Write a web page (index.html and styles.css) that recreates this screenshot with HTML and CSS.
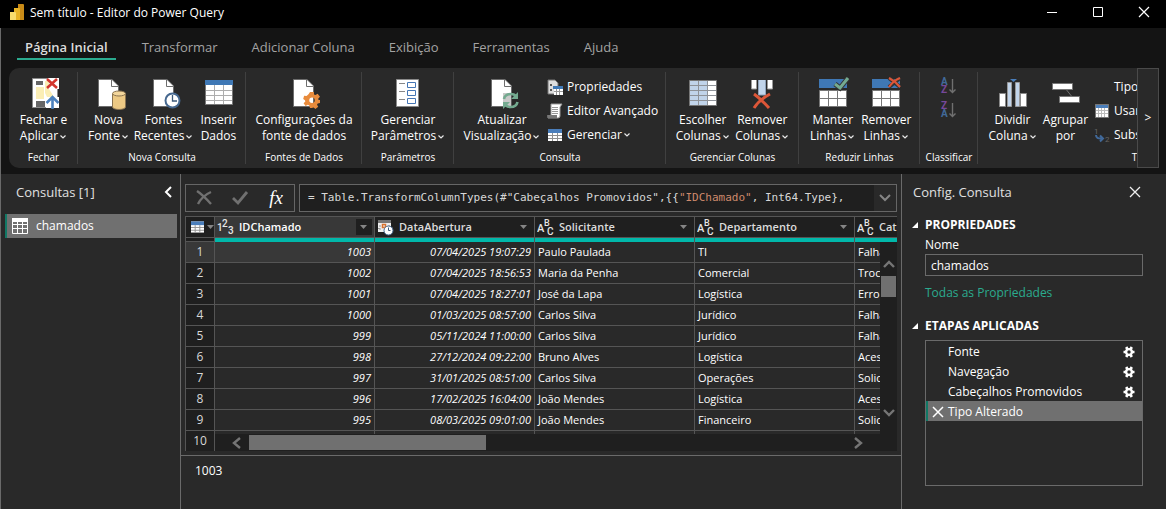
FILE: index.html
```html
<!DOCTYPE html>
<html lang="pt-BR">
<head>
<meta charset="utf-8">
<title>Sem título - Editor do Power Query</title>
<link rel="stylesheet" href="styles.css">
</head>
<body>
<svg class="defs" aria-hidden="true">
  <symbol id="page" viewBox="0 0 32 32"><path d="M5.500 2.500h13.500l6.500 6.500v20.500h-20z" fill="#fff" stroke="#6d6d6d"/><path d="M18.500 3v6.500h7" fill="#fff" stroke="#6d6d6d"/></symbol>
  <symbol id="chev" viewBox="0 0 8 6"><path d="M1.500 1.500l2.500 2.500 2.500-2.500" fill="none" stroke="#e8e8e8" stroke-width="1.200"/></symbol>
  <symbol id="gear" viewBox="0 0 18 18"><path fill-rule="evenodd" d="M7 1h4v2.400l1.500.7 2.100-1.300 2.400 3-1.700 1.600.2 1.600H17v3l-2.300.4-.7 1.400 1.200 2-2.800 2.200-1.700-1.500-1.200.3L9 17H7l-.7-2.500-1.500-.7L2.600 15 .600 12.200l1.700-1.700L2 9.200.200 8l.9-3.200 2.400.300 1.200-1.100 1-1zM9 6.500a2.700 2.700 0 100 5.400 2.700 2.700 0 000-5.400z"/></symbol>
  <symbol id="cog" viewBox="0 0 12 12"><path d="M6 6m-5.500 0h11M3.200 1l5.600 10M8.800 1L3.200 11" stroke="#fff" stroke-width="2.600"/><circle cx="6" cy="6" r="2.900" fill="#292929" stroke="#fff" stroke-width="2.400"/></symbol>
  <symbol id="grid" viewBox="0 0 14 12"><path d="M0 0h14v12H0z" fill="#fff"/><path d="M0 0h14v4H0z" fill="#4a7ebb"/><path d="M0 6.500h14M0 9.500h14M4.500 4v8M9.500 4v8" stroke="#8f8f8f"/></symbol>
  <symbol id="abc" viewBox="0 0 17 18"><g fill="#e6e6e6" font-family="Roboto, sans-serif" font-size="11" font-weight="500"><text x="0" y="14">A</text><text x="7" y="8" font-size="9">B</text><text x="10" y="17" font-size="10">C</text></g></symbol>
  <symbol id="drop" viewBox="0 0 8 5"><path d="M0 0h7l-3.500 4z" fill="#858585"/></symbol>
</svg>

<header class="titlebar">
  <svg class="logo" viewBox="0 0 14 16"><path d="M8 0h5q1 0 1 1v15H8z" fill="#c98b17"/><path d="M4 4h5q1 0 1 1v11H4z" fill="#e8b325"/><path d="M0 8h5q1 0 1 1v7H0z" fill="#f8dc6c"/></svg>
  <h1>Sem título - Editor do Power Query</h1>
  <div class="window-buttons">
    <button aria-label="Minimizar"><svg viewBox="0 0 12 12"><path d="M1 6.500h10" stroke="#fff"/></svg></button>
    <button aria-label="Maximizar"><svg viewBox="0 0 12 12"><path d="M1.500 1.500h9v9h-9z" fill="none" stroke="#fff"/></svg></button>
    <button aria-label="Fechar"><svg viewBox="0 0 12 12"><path d="M1 1l10 10M11 1L1 11" stroke="#fff" stroke-width="1.200"/></svg></button>
  </div>
</header>

<div class="app">
  <nav class="tabs">
    <button class="active">Página Inicial</button><button>Transformar</button><button>Adicionar Coluna</button><button>Exibição</button><button>Ferramentas</button><button>Ajuda</button>
  </nav>

  <div class="ribbon">
    <div class="groups">
      <section class="group g-close">
        <div class="tools">
          <button class="tool"><svg viewBox="0 0 32 32"><path d="M4.500 1.500h25v29h-25z" fill="#fff" stroke="#8a8a8a"/><path d="M20 1h11v11H20zM18 20h13v11H18z" fill="#fff"/><path d="M8 4h7v4H8zM8 24h9v6H8z" fill="#666"/><path d="M8 10h8v12H8zM17 4h4v8l5 8h-7l-2-4z" fill="#fbeeb5"/><path d="M19 2l10 9M29 2l-10 9" stroke="#d2352d" stroke-width="2.600"/><path d="M24.500 32V21M18.500 26l6-6 6 6" fill="none" stroke="#4c81bd" stroke-width="2.600"/></svg><span>Fechar e<br>Aplicar<svg class="chev"><use href="#chev"/></svg></span></button>
        </div>
        <h2>Fechar</h2>
      </section>
      <section class="group g-new">
        <div class="tools">
          <button class="tool"><svg viewBox="0 0 32 32"><use href="#page"/><path d="M19.500 17v13c0 3.300 13 3.300 13 0V17z" fill="#edc984" stroke="#8a7350"/><ellipse cx="26" cy="16.500" rx="6.500" ry="2.500" fill="#f3d69b" stroke="#8a7350"/></svg><span>Nova<br>Fonte<svg class="chev"><use href="#chev"/></svg></span></button>
          <button class="tool"><svg viewBox="0 0 32 32"><use href="#page"/><circle cx="24.500" cy="23.500" r="7" fill="#fff" stroke="#46688f" stroke-width="2"/><path d="M24.500 18v6h4.500" fill="none" stroke="#3b5878" stroke-width="1.300"/></svg><span>Fontes<br>Recentes<svg class="chev"><use href="#chev"/></svg></span></button>
          <button class="tool"><svg viewBox="0 0 32 32"><path d="M2.500 3.500h27v24h-27z" fill="#fff" stroke="#777"/><path d="M2 3h28v5H2z" fill="#3f78b5"/><path d="M3 13.500h26M3 18.500h26M3 23.500h26M11.500 8v19M20.500 8v19" stroke="#adadad"/></svg><span>Inserir<br>Dados</span></button>
        </div>
        <h2>Nova Consulta</h2>
      </section>
      <section class="group g-source">
        <div class="tools">
          <button class="tool"><svg viewBox="0 0 32 32"><use href="#page"/><use href="#gear" x="15" y="14" width="18" height="18" fill="#e88b3c"/></svg><span>Configurações da<br>fonte de dados</span></button>
        </div>
        <h2>Fontes de Dados</h2>
      </section>
      <section class="group g-param">
        <div class="tools">
          <button class="tool"><svg viewBox="0 0 32 32"><path d="M4.500 2.500h22v27h-22z" fill="#fff" stroke="#8a8a8a"/><path d="M7 6.500h6M7 14.500h6M7 22.500h6" stroke="#888"/><path d="M15.500 5.500h8v5h-8zM15.500 13.500h8v5h-8zM15.500 21.500h8v5h-8z" fill="#fff" stroke="#4576b5"/></svg><span>Gerenciar<br>Parâmetros<svg class="chev"><use href="#chev"/></svg></span></button>
        </div>
        <h2>Parâmetros</h2>
      </section>
      <section class="group g-query">
        <div class="tools">
          <button class="tool"><svg viewBox="0 0 32 32"><use href="#page"/><path d="M17 16h15v14H17z" fill="#292929" opacity=".25"/><path d="M18 22q1-5 7-5 3 0 5 2M31.500 25q-1 5-7 5-3 0-5-2" fill="none" stroke="#74aa90" stroke-width="2.600"/><path d="M32 15v7h-7zM17 32v-7h7z" fill="#74aa90"/></svg><span>Atualizar<br>Visualização<svg class="chev"><use href="#chev"/></svg></span></button>
          <div class="stack">
            <button><svg viewBox="0 0 16 16"><path d="M1 1h7l3 3v11H1z" fill="#ddd" stroke="#777"/><path d="M3 5h2v2H3zM3 10h2v2H3z" fill="#555"/><path d="M7 8h9v8H7z" fill="#fff"/><path d="M6 7h10v3H6z" fill="#3f78b5"/><path d="M7 12.500h9M9.500 10v6M12.500 10v6" stroke="#999"/></svg>Propriedades</button>
            <button><svg viewBox="0 0 16 16"><path d="M4 1h11l-2 3v9q0 2-2 2H1v-2h3z" fill="#fff" stroke="#999"/><path d="M5 4.500h6M5 6.500h6M5 8.500h6M5 10.500h6" stroke="#999"/><path d="M0 12h10v3H1z" fill="#777"/></svg>Editor Avançado</button>
            <button><svg viewBox="0 0 16 16"><use href="#grid" x="1" y="2" width="14" height="12"/></svg>Gerenciar<svg class="chev"><use href="#chev"/></svg></button>
          </div>
        </div>
        <h2>Consulta</h2>
      </section>
      <section class="group g-cols">
        <div class="tools">
          <button class="tool"><svg viewBox="0 0 32 32"><path d="M2.500 3.500h27v25h-27z" fill="#fff" stroke="#777"/><path d="M3 4h17v24H3z" fill="#c1d4ea"/><path d="M3 8.500h26M3 13.500h26M3 18.500h26M3 23.500h26M11.500 4v24M20.500 4v24" stroke="#8e9298"/></svg><span>Escolher<br>Colunas<svg class="chev"><use href="#chev"/></svg></span></button>
          <button class="tool"><svg viewBox="0 0 32 32"><path d="M5.500 3v9h5V3M21.500 3v9h5V3" fill="#fff" stroke="#999"/><path d="M12.500 3v15h7V3" fill="#c1d4ea" stroke="#8fa3bb"/><path d="M8 17q7 5 15 14M24 17Q13 23 8 31" fill="none" stroke="#dc5638" stroke-width="3"/></svg><span>Remover<br>Colunas<svg class="chev"><use href="#chev"/></svg></span></button>
        </div>
        <h2>Gerenciar Colunas</h2>
      </section>
      <section class="group g-rows">
        <div class="tools">
          <button class="tool"><svg viewBox="0 0 32 32"><path d="M2 2h28v9H2z" fill="#3f78b5"/><path d="M2.500 13.500h27v16h-27zM2.500 21.500h27M11.500 13v16M20.500 13v16" fill="#fff" stroke="#777"/><path d="M18 7l5 4 8-10" fill="none" stroke="#333" stroke-width="5"/><path d="M18 7l5 4 8-10" fill="none" stroke="#74aa90" stroke-width="3"/></svg><span>Manter<br>Linhas<svg class="chev"><use href="#chev"/></svg></span></button>
          <button class="tool"><svg viewBox="0 0 32 32"><path d="M2 2h28v9H2z" fill="#3f78b5"/><path d="M2.500 13.500h27v16h-27zM2.500 21.500h27M11.500 13v16M20.500 13v16" fill="#fff" stroke="#777"/><path d="M19 1l11 9M30 1L19 10" fill="none" stroke="#333" stroke-width="4"/><path d="M19 1q6 3 11 9M30 1Q23 4 19 10" fill="none" stroke="#dc5638" stroke-width="2.200"/></svg><span>Remover<br>Linhas<svg class="chev"><use href="#chev"/></svg></span></button>
        </div>
        <h2>Reduzir Linhas</h2>
      </section>
      <section class="group g-sort">
        <div class="tools sorts">
          <button aria-label="Classificar em Ordem Crescente"><svg viewBox="0 0 16 18"><g font-family="Roboto, sans-serif" font-size="10" font-weight="700"><text x="0" y="8" fill="#41699a">A</text><text x="0" y="16" fill="#76489a">Z</text></g><path d="M11.500 2v14M8.500 12.500l3 3 3-3" fill="none" stroke="#707070" stroke-width="1.400"/></svg></button>
          <button aria-label="Classificar em Ordem Decrescente"><svg viewBox="0 0 16 18"><g font-family="Roboto, sans-serif" font-size="10" font-weight="700"><text x="0" y="8" fill="#76489a">Z</text><text x="0" y="16" fill="#41699a">A</text></g><path d="M11.500 2v14M8.500 12.500l3 3 3-3" fill="none" stroke="#707070" stroke-width="1.400"/></svg></button>
        </div>
        <h2>Classificar</h2>
      </section>
      <section class="group g-transform">
        <div class="tools">
          <button class="tool"><svg viewBox="0 0 32 32"><path d="M2.500 16.500h6v13h-6zM23.500 16.500h6v13h-6z" fill="#fff" stroke="#888"/><path d="M10.500 5.500h4v24h-4zM18.500 5.500h4v24h-4z" fill="#c1d4ea" stroke="#999"/><path d="M13 2h7l-3.500 3z" fill="#4a7ebb"/></svg><span>Dividir<br>Coluna<svg class="chev"><use href="#chev"/></svg></span></button>
          <button class="tool"><svg viewBox="0 0 32 32"><path d="M15 11l8 10" stroke="#707070"/><path d="M2.500 6.500h20v6h-20zM9.500 19.500h20v6h-20z" fill="#fff" stroke="#777"/></svg><span>Agrupar<br>por</span></button>
          <div class="stack">
            <button><svg viewBox="0 0 16 16"></svg>Tipo</button>
            <button><svg viewBox="0 0 16 16"><path d="M1.500 1.500h13v13h-13z" fill="#fff" stroke="#777"/><path d="M2 2h12v3H2z" fill="#4a7ebb"/><path d="M2 7.500h12M2 10.500h12M4.500 5v9M7.500 5v9M10.500 5v9" stroke="#bbb"/></svg>Usar</button>
            <button><svg viewBox="0 0 16 16"><g fill="#666" font-family="Roboto, sans-serif" font-size="8"><text x="0" y="7">1</text><text x="11" y="15">2</text></g><path d="M2 8q0 4 6 3.500M6 8.500l3 3-3 3" fill="none" stroke="#41699a" stroke-width="2"/></svg>Substituir</button>
          </div>
        </div>
        <h2>Transformar</h2>
      </section>
    </div>
    <button class="more" aria-label="Rolar para a direita">&gt;</button>
  </div>

  <main class="workspace">
    <aside class="queries">
      <div class="panel-head"><h2>Consultas [1]</h2><button aria-label="Recolher"><svg width="8" height="12" viewBox="0 0 8 12"><path d="M7 1L2 6l5 5" fill="none" stroke="#fff" stroke-width="2"/></svg></button></div>
      <button class="query"><svg width="16" height="16" viewBox="0 0 16 16"><path d="M.5.500h15v15H.5zM0 6.500h16M0 10.500h16M5.500 4v12M10.500 4v12" fill="none" stroke="#fff"/><path d="M0 0h16v4H0z" fill="#fff"/></svg>chamados</button>
    </aside>

    <section class="center">
      <div class="formula">
        <div class="formula-tools">
          <button aria-label="Cancelar"><svg width="16" height="16" viewBox="0 0 16 16"><path d="M1 1q6 4 14 13M15 2Q6 6 2 14" fill="none" stroke="#707070" stroke-width="2.400"/></svg></button>
          <button aria-label="Confirmar"><svg width="16" height="16" viewBox="0 0 16 16"><path d="M1 8l5 5L15 2" fill="none" stroke="#707070" stroke-width="2.800"/></svg></button>
          <button class="fx" aria-label="Adicionar etapa">fx</button>
        </div>
        <div class="formula-box">
          <div class="code" role="textbox" aria-label="Fórmula" contenteditable="true" spellcheck="false">= Table.TransformColumnTypes(#"Cabeçalhos Promovidos",{{<span class="str">"IDChamado"</span>, Int64.Type},</div>
          <button aria-label="Expandir fórmula"><svg width="12" height="8" viewBox="0 0 12 8"><path d="M1 1l5 5 5-5" fill="none" stroke="#858585" stroke-width="2"/></svg></button>
        </div>
      </div>

      <div class="grid">
        <table>
          <colgroup><col class="c-num"><col><col><col><col><col></colgroup>
          <thead>
            <tr>
              <th class="corner"><div><svg width="13" height="12"><use href="#grid"/></svg><svg class="drop"><use href="#drop"/></svg></div></th>
              <th class="picked"><div><svg class="type" viewBox="0 0 17 18"><g fill="#e6e6e6" font-family="Roboto, sans-serif" font-size="10" font-weight="500"><text x="0" y="13">1</text><text x="5" y="9">2</text><text x="11" y="16">3</text></g></svg><span>IDChamado</span><button aria-label="Filtrar"><svg class="drop"><use href="#drop"/></svg></button></div></th>
              <th><div><svg class="type" viewBox="0 0 17 18"><path d="M1 2h13v12H1z" fill="#eee"/><path d="M1 2h13v3H1z" fill="#777"/><path d="M3 7v6M12 7v3M1 10.500h3" stroke="#999" stroke-dasharray="2 1"/><path d="M5.500 6.500h3v3h-3z" fill="none" stroke="#d9722e" stroke-width="1.500"/><circle cx="11.500" cy="12.500" r="4.500" fill="#fff" stroke="#46688f"/><path d="M11.500 9.500v3h2" fill="none" stroke="#3b5878"/></svg><span>DataAbertura</span><button aria-label="Filtrar"><svg class="drop"><use href="#drop"/></svg></button></div></th>
              <th><div><svg class="type"><use href="#abc"/></svg><span>Solicitante</span><button aria-label="Filtrar"><svg class="drop"><use href="#drop"/></svg></button></div></th>
              <th><div><svg class="type"><use href="#abc"/></svg><span>Departamento</span><button aria-label="Filtrar"><svg class="drop"><use href="#drop"/></svg></button></div></th>
              <th><div><svg class="type"><use href="#abc"/></svg><span>Categoria</span></div></th>
            </tr>
          </thead>
          <tbody>
            <tr class="current"><th>1</th><td class="n">1003</td><td class="n">07/04/2025 19:07:29</td><td>Paulo Paulada</td><td>TI</td><td>Falha</td></tr>
            <tr><th>2</th><td class="n">1002</td><td class="n">07/04/2025 18:56:53</td><td>Maria da Penha</td><td>Comercial</td><td>Troca</td></tr>
            <tr><th>3</th><td class="n">1001</td><td class="n">07/04/2025 18:27:01</td><td>José da Lapa</td><td>Logística</td><td>Erro</td></tr>
            <tr><th>4</th><td class="n">1000</td><td class="n">01/03/2025 08:57:00</td><td>Carlos Silva</td><td>Jurídico</td><td>Falha</td></tr>
            <tr><th>5</th><td class="n">999</td><td class="n">05/11/2024 11:00:00</td><td>Carlos Silva</td><td>Jurídico</td><td>Falha</td></tr>
            <tr><th>6</th><td class="n">998</td><td class="n">27/12/2024 09:22:00</td><td>Bruno Alves</td><td>Logística</td><td>Acesso</td></tr>
            <tr><th>7</th><td class="n">997</td><td class="n">31/01/2025 08:51:00</td><td>Carlos Silva</td><td>Operações</td><td>Solicitação</td></tr>
            <tr><th>8</th><td class="n">996</td><td class="n">17/02/2025 16:04:00</td><td>João Mendes</td><td>Logística</td><td>Acesso</td></tr>
            <tr><th>9</th><td class="n">995</td><td class="n">08/03/2025 09:01:00</td><td>João Mendes</td><td>Financeiro</td><td>Solicitação</td></tr>
            <tr><th>10</th><td></td><td></td><td></td><td></td><td></td></tr>
          </tbody>
        </table>
        <div class="vscroll">
          <svg width="12" height="8" viewBox="0 0 12 8"><path d="M1 7l5-5 5 5" fill="none" stroke="#757575" stroke-width="2.400"/></svg>
          <div class="vthumb"></div>
          <svg width="12" height="8" viewBox="0 0 12 8"><path d="M1 1l5 5 5-5" fill="none" stroke="#757575" stroke-width="2.400"/></svg>
        </div>
        <div class="hscroll">
          <svg width="9" height="12" viewBox="0 0 9 12"><path d="M8 1L2 6l6 5" fill="none" stroke="#757575" stroke-width="2.400"/></svg>
          <div class="hthumb"></div>
          <svg width="9" height="12" viewBox="0 0 9 12"><path d="M1 1l6 5-6 5" fill="none" stroke="#757575" stroke-width="2.400"/></svg>
        </div>
      </div>
      <div class="preview">1003</div>
    </section>

    <aside class="settings">
      <div class="panel-head"><h2>Config. Consulta</h2><button aria-label="Fechar painel"><svg width="12" height="12" viewBox="0 0 12 12"><path d="M1 1l10 10M11 1L1 11" stroke="#eee" stroke-width="1.300"/></svg></button></div>
      <h3><svg width="6" height="6" viewBox="0 0 6 6"><path d="M6 0v6H0z" fill="#fff"/></svg>PROPRIEDADES</h3>
      <div class="props">
        <label for="name">Nome</label>
        <input id="name" type="text" value="chamados">
        <a href="#">Todas as Propriedades</a>
      </div>
      <h3><svg width="6" height="6" viewBox="0 0 6 6"><path d="M6 0v6H0z" fill="#fff"/></svg>ETAPAS APLICADAS</h3>
      <ul class="steps">
        <li><span></span>Fonte<button aria-label="Editar Fonte"><svg width="12" height="12"><use href="#cog"/></svg></button></li>
        <li><span></span>Navegação<button aria-label="Editar Navegação"><svg width="12" height="12"><use href="#cog"/></svg></button></li>
        <li><span></span>Cabeçalhos Promovidos<button aria-label="Editar Cabeçalhos Promovidos"><svg width="12" height="12"><use href="#cog"/></svg></button></li>
        <li class="selected"><button class="remove" aria-label="Excluir etapa"><svg width="12" height="10" viewBox="0 0 12 10"><path d="M1 0l10 10M11 0L1 10" stroke="#fff" stroke-width="1.500"/></svg></button>Tipo Alterado</li>
      </ul>
    </aside>
  </main>
</div>
</body>
</html>
```
FILE: styles.css
```css
* { box-sizing: border-box; }
body {
  margin: 0;
  min-height: 100vh;
  display: flex;
  flex-direction: column;
  background: #141414;
  color: #fff;
  font: 12px/16px "Open Sans", "Noto Sans", sans-serif;
}
h1, h2, h3, ul { margin: 0; padding: 0; font-size: inherit; font-weight: 400; }
button {
  margin: 0;
  padding: 0;
  border: 0;
  background: none;
  color: inherit;
  font: inherit;
  white-space: nowrap;
}
svg { flex: none; overflow: visible; }
.defs { position: absolute; width: 0; height: 0; }

.titlebar { display: flex; align-items: center; height: 28px; padding-left: 10px; background: #000; }
.logo { width: 14px; height: 16px; margin: 0 6px 4px 0; }
.titlebar h1 { flex: 1; padding-bottom: 2px; }
.window-buttons { display: flex; margin-right: -1px; }
.window-buttons button { display: grid; place-items: center; width: 46px; height: 28px; padding-bottom: 4px; }
.window-buttons svg { width: 12px; height: 12px; }

.app { flex: 1; display: flex; flex-direction: column; border-left: 1px solid #6a6a6a; }
.tabs { display: flex; gap: 18px; height: 40px; padding: 6px 16px 8px; font-size: 13px; color: #a3a3a3; }
.tabs button { padding: 2px 8px 0; border-bottom: 2px solid transparent; }
.tabs .active { color: #dcdcdc; font-weight: 600; border-color: #2bab8f; }

.ribbon { display: flex; height: 100px; margin: 0 7px 6px 8px; background: #292929; border-radius: 10px 0 0 10px; overflow: hidden; }
.groups { flex: 1; display: flex; min-width: 0; overflow: hidden; }
.more { width: 22px; border: 1px solid #4a4a4a; }
.group { flex: none; display: flex; flex-direction: column; justify-content: space-between; position: relative; padding: 9px 0 3px; }
.group::after { content: ""; position: absolute; top: 4px; bottom: 4px; right: 0; width: 1px; background: #404040; }
.group h2 { text-align: center; font-size: 10px; }
.tools { display: flex; }
.tool { display: flex; flex-direction: column; align-items: center; gap: 3px; flex: 1; width: 0; }
.tool > svg { width: 32px; height: 32px; }
.chev { width: 8px; height: 6px; margin-left: 1px; }
.stack { display: flex; flex-direction: column; gap: 8px; padding-top: 2px; }
.stack button { display: flex; align-items: center; height: 16px; }
.stack button > svg:first-child { width: 16px; height: 16px; margin-right: 4px; }
.g-close { width: 69px; }
.g-new { width: 168px; }
.g-new .tools { padding-left: 3px; }
.g-source { width: 116px; }
.g-param { width: 92px; }
.g-query { width: 212px; }
.g-query .tool { flex: none; width: 96px; }
.g-query .stack { margin-left: -3px; }
.g-cols { width: 133px; }
.g-cols .tools { padding: 0 7px; }
.g-rows { width: 121px; }
.g-rows .tools { padding: 0 7px; }
.g-sort { width: 58px; }
.sorts { flex-direction: column; align-items: center; gap: 6px; }
.sorts button, .sorts svg { display: block; width: 16px; height: 18px; }
.g-transform { width: 366px; }
.g-transform .tools { padding-left: 8px; }
.g-transform .tool { flex: none; width: 53px; }
.g-transform .stack { margin-left: 2px; }

.workspace { flex: 1; display: grid; grid-template-columns: 180px 1fr 265px; background: #292929; }
.panel-head { display: flex; align-items: center; justify-content: space-between; height: 36px; font-size: 13px; color: #e0e0e0; }
.panel-head button { display: grid; place-items: center; width: 20px; height: 20px; }
.queries { border-right: 1px solid #6a6a6a; }
.queries .panel-head { padding: 0 2px 0 15px; }
.query { display: flex; align-items: center; gap: 8px; width: calc(100% - 7px); height: 24px; margin: 4px 3px 0 4px; padding-left: 5px; background: #707070; border-left: 2px solid #117865; }

.center { display: flex; flex-direction: column; min-width: 0; padding-top: 10px; }
.formula { display: flex; gap: 4px; padding: 0 4px; height: 28px; }
.formula-tools { display: flex; width: 110px; border: 1px solid #666; }
.formula-tools button { flex: 1; display: grid; place-items: center; }
.formula-tools .fx { font: italic 19px/20px "Liberation Serif", serif; }
.formula-box { flex: 1; display: flex; min-width: 0; align-items: center; border: 1px solid #666; background: #1f1f1f; }
.formula-box button { display: grid; place-items: center; width: 22px; height: 26px; background: #292929; }
.code { flex: 1; min-width: 0; padding-left: 8px; overflow: hidden; white-space: nowrap; font: 11px/16px "DejaVu Sans Mono", monospace; color: #d8d8d8; }
.str { color: #ce8a6c; }

.grid { position: relative; height: 235px; margin: 4px 4px 0; overflow: hidden; }
table { width: 830px; table-layout: fixed; border-collapse: separate; border-spacing: 0; border-left: 1px solid #555; font-size: 11px; }
.c-num { width: 29px; }
th, td { height: 21px; padding: 0 3px; border-right: 1px solid #555; border-bottom: 1px solid #555; line-height: 20px; text-align: left; white-space: nowrap; overflow: hidden; }
.n { text-align: right; font-style: italic; }
tbody th { background: #1f1f1f; padding: 0; text-align: center; font-size: 12px; font-weight: 400; color: #d8d8d8; }
.current th, .current td:nth-child(2) { background: #383838; }
thead th { height: 26px; padding: 0 0 4px; border-top: 1px solid #555; border-bottom: 0; background: linear-gradient(#01b8aa, #01b8aa) bottom / 100% 4px no-repeat #1f1f1f; font-weight: 600; color: #dcdcdc; }
thead th div { display: flex; align-items: center; height: 21px; border-bottom: 1px solid #555; padding: 0 2px; }
thead th.picked { background-color: #383838; color: #fff; }
thead th.corner { background: #1f1f1f; border-bottom: 1px solid #555; padding-bottom: 3px; }
.corner div { gap: 3px; padding: 0 3px 0 5px; }
.type { width: 17px; height: 18px; margin-right: 5px; }
.drop { width: 8px; height: 5px; }
th button { display: grid; place-items: center; width: 16px; height: 16px; margin-left: auto; }
.picked button { background: #1f1f1f; }
.vscroll { position: absolute; top: 26px; right: 0; bottom: 17px; width: 17px; background: #1f1f1f; padding: 18px 0 17px; display: flex; flex-direction: column; align-items: center; }
.vthumb { width: 15px; height: 21px; margin: 8px 0 auto; background: #707070; }
.hscroll { position: absolute; left: 30px; right: 0; bottom: 0; height: 17px; background: #1f1f1f; padding: 0 34px 0 17px; display: flex; align-items: center; }
.hthumb { width: 237px; height: 15px; margin: 0 auto 0 8px; background: #707070; }
.preview { flex: 1; margin-top: 4px; padding: 7px 14px; border-top: 1px solid #6a6a6a; }

.settings { border-left: 1px solid #6a6a6a; padding: 0 23px 23px 11px; display: flex; flex-direction: column; }
.settings .panel-head { margin-right: -2px; }
.settings h3 { display: flex; align-items: center; gap: 7px; margin: 7px 0 3px -1px; font-weight: 700; }
.props, .steps { margin-left: 12px; }
.props { display: flex; flex-direction: column; align-items: flex-start; }
.props label { line-height: 18px; }
.props input { width: 100%; height: 22px; padding: 0 5px; border: 1px solid #6a6a6a; background: none; color: #fff; font: inherit; }
.props a { margin: 9px 0 10px; color: #2bab8f; text-decoration: none; }
.steps { flex: 1; margin-top: 3px; border: 1px solid #6a6a6a; list-style: none; }
.steps li { display: flex; align-items: center; height: 20px; padding: 1px 7px 0 0; border-left: 2px solid transparent; }
.steps li > span { width: 20px; }
.steps li button { display: grid; margin-left: auto; }
.steps .selected { background: #707070; border-color: #117865; }
.steps .remove { width: 20px; margin: 0; place-items: center; }
```
